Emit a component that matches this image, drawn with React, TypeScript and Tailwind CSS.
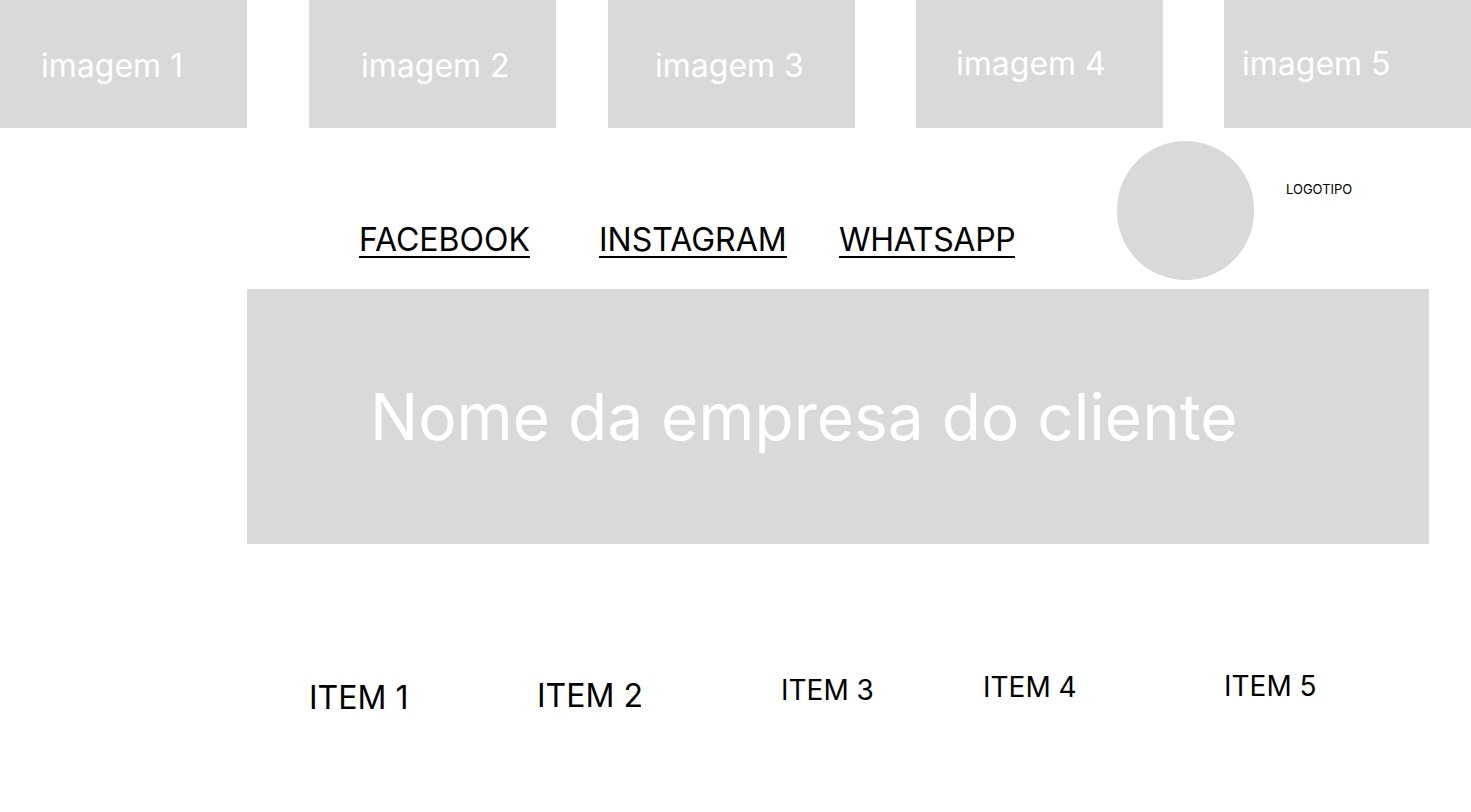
const images = [
  { label: 'imagem 1', cls: 'ml-0 pl-[41px] pt-[4px]' },
  { label: 'imagem 2', cls: 'ml-[62px] pl-[52px] pt-[4px]' },
  { label: 'imagem 3', cls: 'ml-[52px] pl-[47px] pt-[4px]' },
  { label: 'imagem 4', cls: 'ml-[61px] pl-[40px]' },
  { label: 'imagem 5', cls: 'ml-[61px] pl-[18px]' },
];

export default function App() {
  return (
    <div className="w-[1471px] h-[812px] bg-white overflow-hidden font-['Inter',sans-serif]">
      {/* image strip */}
      <div className="flex h-[128px]">
        {images.map((img) => (
          <div
            key={img.label}
            className={`w-[247px] h-[128px] shrink-0 bg-[#d9d9d9] flex items-center text-white text-[32px] leading-none ${img.cls}`}
          >
            {img.label}
          </div>
        ))}
      </div>

      {/* social links + logo */}
      <div className="flex items-start h-[161px] pl-[359px]">
        <div className="w-[240px] mt-[96px]">
          <span className="inline-block text-[32px] leading-none text-black border-b-2 border-black">FACEBOOK</span>
        </div>
        <div className="w-[240px] mt-[96px]">
          <span className="inline-block text-[32px] leading-none text-black border-b-2 border-black">INSTAGRAM</span>
        </div>
        <div className="w-[278px] mt-[96px]">
          <span className="inline-block text-[32px] leading-none tracking-[-0.3px] text-black border-b-2 border-black">WHATSAPP</span>
        </div>
        <div className="w-[137px] h-[139px] mt-[13px] rounded-full bg-[#d9d9d9] shrink-0" />
        <div className="ml-[32px] mt-[55px] text-[13px] leading-none text-black">LOGOTIPO</div>
      </div>

      {/* banner */}
      <div className="ml-[247px] w-[1182px] h-[255px] bg-[#d9d9d9] flex items-center pl-[123px]">
        <span className="text-white text-[64px] leading-none">Nome da empresa do cliente</span>
      </div>

      {/* items */}
      <div className="flex items-start pl-[309px] text-black leading-none">
        <div className="w-[228px] mt-[138px] text-[32px]">ITEM 1</div>
        <div className="w-[244px] mt-[136px] text-[32px]">ITEM 2</div>
        <div className="w-[202px] mt-[132px] text-[28px]">ITEM 3</div>
        <div className="w-[241px] mt-[129px] text-[28px]">ITEM 4</div>
        <div className="mt-[128px] text-[28px]">ITEM 5</div>
      </div>
    </div>
  );
}
